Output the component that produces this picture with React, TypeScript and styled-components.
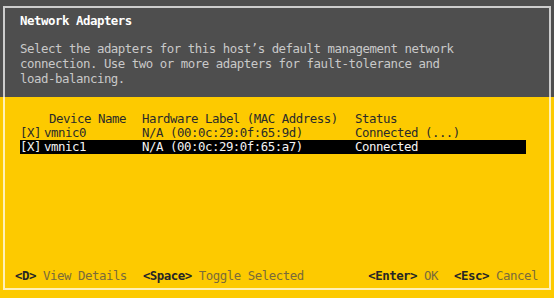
import styled, { createGlobalStyle } from "styled-components";

const GlobalStyle = createGlobalStyle`
  html, body {
    margin: 0;
    padding: 0;
    background: #fdca00;
  }
`;

const Screen = styled.div`
  width: 554px;
  height: 298px;
  box-sizing: border-box;
  padding: 6px 3px 8px;
  background: linear-gradient(to bottom, #4e4e4e 0, #4e4e4e 97px, #fdca00 97px);
  font-family: "DejaVu Sans Mono", "Liberation Mono", monospace;
  font-size: 12.4px;
  letter-spacing: -0.47px;
`;

const Frame = styled.div`
  height: 100%;
  box-sizing: border-box;
  border: 2px solid rgba(255, 255, 255, 0.72);
  display: flex;
  flex-direction: column;
`;

const Header = styled.div`
  height: 89px;
  box-sizing: border-box;
  padding: 5px 0 0 15px;
`;

const Title = styled.div`
  color: #ffffff;
  font-weight: bold;
  line-height: 15px;
  margin-bottom: 13px;
`;

const Description = styled.div`
  color: #c9c9c9;
  line-height: 15px;
  white-space: pre;
`;

const Body = styled.div`
  flex: 1;
  display: flex;
  flex-direction: column;
  padding: 15px 0 5px;
`;

const Table = styled.div`
  margin-left: 15px;
  width: 506px;
`;

const Row = styled.div<{ $selected?: boolean }>`
  display: grid;
  grid-template-columns: 24px 98px 213px 1fr;
  height: 14px;
  line-height: 14px;
  white-space: pre;
  background: ${(p) => (p.$selected ? "#000" : "transparent")};
  color: ${(p) => (p.$selected ? "#f4f4f4" : "#2a2a2a")};
`;

const HeadCell = styled.span<{ $indent?: number }>`
  padding-left: ${(p) => p.$indent ?? 0}px;
`;

const Footer = styled.div`
  margin-top: auto;
  display: flex;
  justify-content: space-between;
  padding: 0 11px 0 10px;
  line-height: 14px;
  white-space: pre;
`;

const Group = styled.div`
  display: flex;
  gap: 16px;
`;

const Key = styled.span`
  color: #262626;
  font-weight: bold;
`;

const Action = styled.span`
  color: #7a6b3a;
`;

const adapters = [
  { name: "vmnic0", mac: "N/A (00:0c:29:0f:65:9d)", status: "Connected (...)" },
  { name: "vmnic1", mac: "N/A (00:0c:29:0f:65:a7)", status: "Connected" },
];

export default function App() {
  const selected = 1;

  return (
    <>
      <GlobalStyle />
      <Screen>
        <Frame>
          <Header>
            <Title>Network Adapters</Title>
            <Description>
              {"Select the adapters for this host’s default management network\nconnection. Use two or more adapters for fault-tolerance and\nload-balancing."}
            </Description>
          </Header>
          <Body>
            <Table>
              <Row>
                <span />
                <HeadCell $indent={5}>Device Name</HeadCell>
                <HeadCell>Hardware Label (MAC Address)</HeadCell>
                <HeadCell>Status</HeadCell>
              </Row>
              {adapters.map((a, i) => (
                <Row key={a.name} $selected={i === selected}>
                  <span>[X]</span>
                  <span>{a.name}</span>
                  <span>{a.mac}</span>
                  <span>{a.status}</span>
                </Row>
              ))}
            </Table>
            <Footer>
              <Group>
                <span><Key>{"<D>"}</Key> <Action>View Details</Action></span>
                <span><Key>{"<Space>"}</Key> <Action>Toggle Selected</Action></span>
              </Group>
              <Group>
                <span><Key>{"<Enter>"}</Key> <Action>OK</Action></span>
                <span><Key>{"<Esc>"}</Key> <Action>Cancel</Action></span>
              </Group>
            </Footer>
          </Body>
        </Frame>
      </Screen>
    </>
  );
}
